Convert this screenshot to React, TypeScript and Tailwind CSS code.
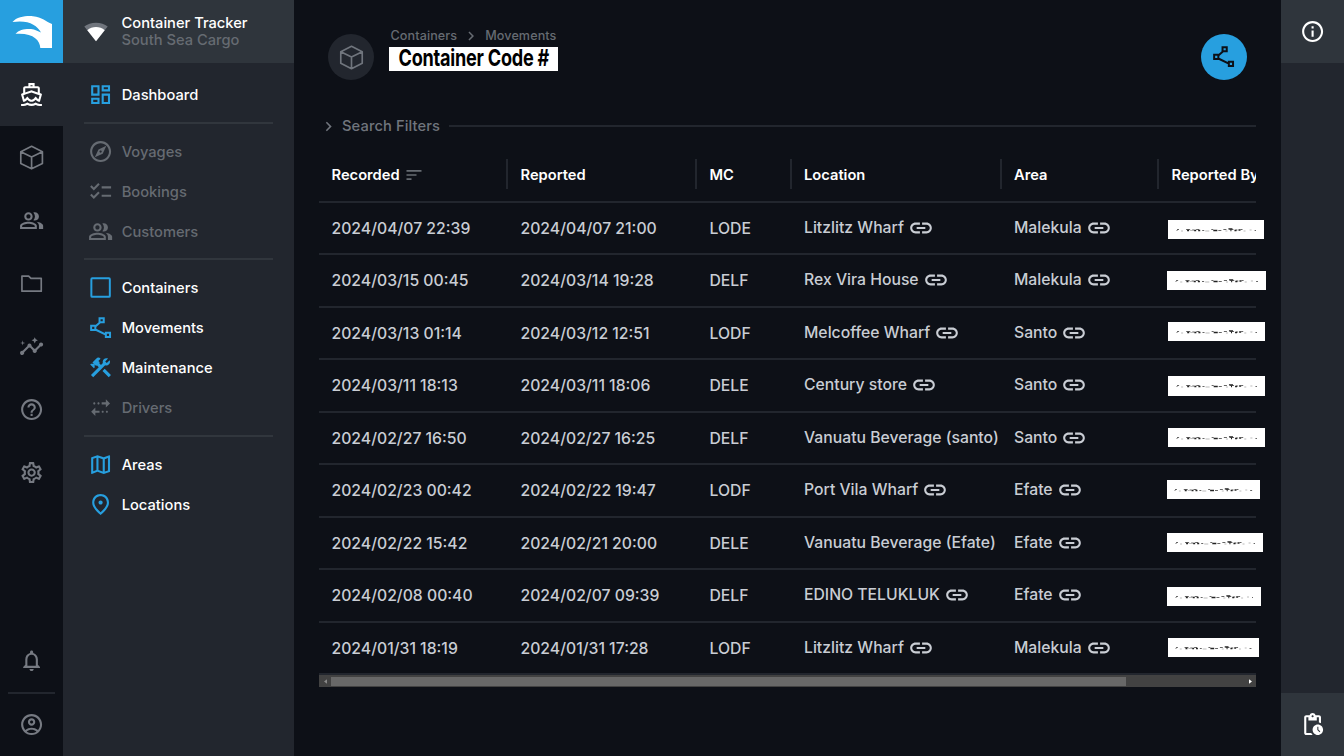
import React from "react";
import {
  MdChecklist,
  MdChevronRight,
  MdConstruction,
  MdHelpOutline,
  MdInfoOutline,
  MdInsights,
  MdLink,
  MdMultipleStop,
  MdNotificationsNone,
  MdOutlineAccountCircle,
  MdOutlineDashboard,
  MdOutlineDirectionsBoat,
  MdOutlineExplore,
  MdOutlineMap,
  MdOutlinePeopleAlt,
  MdOutlinePlace,
  MdOutlineSettings,
  MdPendingActions,
  MdSort,
} from "react-icons/md";

type IconProps = { className?: string };
type IconComponent = (props: IconProps) => React.ReactNode;

function CubeIcon({ className }: IconProps) {
  return (
    <svg viewBox="0 0 24 24" className={className} fill="none" stroke="currentColor" strokeWidth="1.6" strokeLinejoin="round">
      <path d="M12 1.3 22.3 6.4V17.6L12 22.7 1.7 17.6V6.4ZM1.7 6.4 12 11.5 22.3 6.4M12 11.5V22.7" />
    </svg>
  );
}

function FolderIcon({ className }: IconProps) {
  return (
    <svg viewBox="0 0 24 24" className={className} fill="none" stroke="currentColor" strokeWidth="1.6" strokeLinejoin="round">
      <path d="M2.8 4.8H9.2L11.4 7H21.2V19.2H2.8Z" />
    </svg>
  );
}

function SquareIcon({ className }: IconProps) {
  return (
    <svg viewBox="0 0 24 24" className={className} fill="none" stroke="currentColor" strokeWidth="1.9">
      <rect x="3.2" y="3.2" width="17.6" height="17.6" rx="0.8" />
    </svg>
  );
}

function RouteIcon({ className }: IconProps) {
  return (
    <svg viewBox="0 0 24 24" className={className} fill="none" stroke="currentColor" strokeWidth="1.9">
      <path d="M11 3H15V7H11ZM3 10.3H7V14.3H3ZM17 17H21V21H17ZM11.6 7 7 11M7 13.8 17 18.7" />
    </svg>
  );
}

function Logo() {
  return (
    <svg viewBox="0 0 63 63" className="h-[63px] w-[63px]" fill="#fff">
      <path d="M12.5 22C17 16.5 27 15.6 33 16.2C42 17 46 21.5 52 24V48H40.3C40 40 33 32.5 15.5 33.8C19 29.5 26 28.5 31 29C35 29.5 38 31 41 32.5C37 25 28 19.5 12.5 22Z" />
    </svg>
  );
}

function SignalIcon() {
  return (
    <svg viewBox="0 0 24 20" className="h-5 w-6">
      <path d="M.3 4.5C6 -.6 18 -.6 23.7 4.5L12 19.3Z" fill="#70757d" />
      <path d="M3.3 8.2C8 3.8 16 3.8 20.7 8.2L12 19.3Z" fill="#fff" />
    </svg>
  );
}

const railItems: IconComponent[] = [
  CubeIcon,
  MdOutlinePeopleAlt,
  FolderIcon,
  MdInsights,
  MdHelpOutline,
  MdOutlineSettings,
];

type NavItem = { label: string; icon: IconComponent; muted?: boolean };

const navGroups: NavItem[][] = [
  [{ label: "Dashboard", icon: MdOutlineDashboard }],
  [
    { label: "Voyages", icon: MdOutlineExplore, muted: true },
    { label: "Bookings", icon: MdChecklist, muted: true },
    { label: "Customers", icon: MdOutlinePeopleAlt, muted: true },
  ],
  [
    { label: "Containers", icon: SquareIcon },
    { label: "Movements", icon: RouteIcon },
    { label: "Maintenance", icon: MdConstruction },
    { label: "Drivers", icon: MdMultipleStop, muted: true },
  ],
  [
    { label: "Areas", icon: MdOutlineMap },
    { label: "Locations", icon: MdOutlinePlace },
  ],
];

type Movement = {
  recorded: string;
  reported: string;
  mc: string;
  location: string;
  area: string;
  mask: string;
  hideLink?: boolean;
};

const movements: Movement[] = [
  { recorded: "2024/04/07 22:39", reported: "2024/04/07 21:00", mc: "LODE", location: "Litzlitz Wharf", area: "Malekula", mask: "ml-[9px] mt-[17.5px] w-24 h-[19px]" },
  { recorded: "2024/03/15 00:45", reported: "2024/03/14 19:28", mc: "DELF", location: "Rex Vira House", area: "Malekula", mask: "ml-2 mt-[16px] w-[99px] h-[19px]" },
  { recorded: "2024/03/13 01:14", reported: "2024/03/12 12:51", mc: "LODF", location: "Melcoffee Wharf", area: "Santo", mask: "ml-[9px] mt-[14.5px] w-[97px] h-[19px]" },
  { recorded: "2024/03/11 18:13", reported: "2024/03/11 18:06", mc: "DELE", location: "Century store", area: "Santo", mask: "ml-[9px] mt-[16px] w-[97px] h-5" },
  { recorded: "2024/02/27 16:50", reported: "2024/02/27 16:25", mc: "DELF", location: "Vanuatu Beverage (santo)", area: "Santo", mask: "ml-[9px] mt-[15.5px] w-[97px] h-[19px]", hideLink: true },
  { recorded: "2024/02/23 00:42", reported: "2024/02/22 19:47", mc: "LODF", location: "Port Vila Wharf", area: "Efate", mask: "ml-2 mt-[15px] w-[93px] h-[19px]" },
  { recorded: "2024/02/22 15:42", reported: "2024/02/21 20:00", mc: "DELE", location: "Vanuatu Beverage (Efate)", area: "Efate", mask: "ml-2 mt-[15.5px] w-24 h-[19px]", hideLink: true },
  { recorded: "2024/02/08 00:40", reported: "2024/02/07 09:39", mc: "DELF", location: "EDINO TELUKLUK", area: "Efate", mask: "ml-2 mt-[17px] w-[94px] h-[19px]" },
  { recorded: "2024/01/31 18:19", reported: "2024/01/31 17:28", mc: "LODF", location: "Litzlitz Wharf", area: "Malekula", mask: "ml-[9px] mt-[15.5px] w-[91px] h-[19px]" },
];

const columns = "grid grid-cols-[189px_189px_94.5px_210px_157.5px_97px]";

function MaskedName({ className }: { className: string }) {
  return (
    <div className={`${className} flex items-center justify-center bg-white`}>
      <svg viewBox="0 0 80 4" preserveAspectRatio="none" className="h-1 w-[84%]" fill="none">
        <path d="M0 2.5H2M5 3H7M14 2.5H16M29 3H33M49 3H51M67 3H69M73 2H75" stroke="#bbb" />
        <path d="M1 1.5H3M10 1.5H14M16 2H18M20 1.5H23M26 2.5H28M35 1.5H37M42 2.5H45M47 1.5H50M53 1.5H57M59 2H61M64 1.5H66M78 2.5H80" stroke="#666" strokeWidth="1.2" />
        <path d="M11 2.5H13M18 2.5H20M22 2.5H24M37 2.5H41M52 .8H56M54 2.5H55M58 2.5H60M62 2H64" stroke="#222" strokeWidth="1.3" />
      </svg>
    </div>
  );
}

function LinkedText({ text, hideLink }: { text: string; hideLink?: boolean }) {
  return (
    <div className="flex items-center gap-1 overflow-hidden whitespace-nowrap pl-[12.5px]">
      <span>{text}</span>
      {!hideLink && <MdLink className="size-[26px] shrink-0" />}
    </div>
  );
}

function HeaderCell({ children, last }: { children: React.ReactNode; last?: boolean }) {
  return (
    <div className={`flex h-[30px] items-center whitespace-nowrap pl-[12.5px] pt-0.5 ${last ? "" : "border-r-2 border-[#22262e]"}`}>
      {children}
    </div>
  );
}

export default function App() {
  return (
    <div className="flex h-screen w-screen overflow-hidden bg-[#0d1017] font-['Inter',sans-serif] text-[15.75px] text-white">
      <nav className="flex w-[63px] shrink-0 flex-col items-center text-[#767a82]">
        <div className="size-[63px] bg-[#279fdf]">
          <Logo />
        </div>
        <div className="flex size-[63px] items-center justify-center bg-[#22262e] text-white">
          <MdOutlineDirectionsBoat className="size-[25px]" />
        </div>
        {railItems.map((Icon, i) => (
          <div key={i} className="flex size-[63px] items-center justify-center">
            <Icon className="size-[25.2px]" />
          </div>
        ))}
        <div className="mt-auto flex size-[63px] items-center justify-center">
          <MdNotificationsNone className="size-[25.2px]" />
        </div>
        <div className="h-0.5 w-[47px] bg-[#22262e]" />
        <div className="flex h-[62px] w-[63px] items-center justify-center">
          <MdOutlineAccountCircle className="size-[25.2px]" />
        </div>
      </nav>

      <aside className="w-[231px] shrink-0 bg-[#22262e]">
        <header className="flex h-[63px] items-center bg-[#2f353c] pl-[21px]">
          <SignalIcon />
          <div className="ml-[13.5px] pt-px text-[14.7px] font-medium leading-[17.5px]">
            <div>Container Tracker</div>
            <div className="text-[#666b72]">South Sea Cargo</div>
          </div>
        </header>
        <div className="px-[21px] pt-3">
          {navGroups.map((group, gi) => (
            <div key={gi}>
              {gi > 0 && <div className="mb-[7.6px] mt-[6.9px] h-0.5 bg-[#31363d]" />}
              {group.map(({ label, icon: Icon, muted }) => (
                <div key={label} className={`flex h-10 items-center pl-1 font-medium ${muted ? "text-[#666b72]" : "text-white"}`}>
                  <Icon className={`size-[25.2px] ${muted ? "" : "text-[#279fdf]"}`} />
                  <span className="ml-[8.5px] pt-px text-[14.7px]">{label}</span>
                </div>
              ))}
            </div>
          ))}
        </div>
      </aside>

      <main className="min-w-0 flex-1 px-[25px]">
        <header className="flex h-[105px] items-start pl-[9px] pr-[9px]">
          <div className="mt-[34px] flex size-[46px] items-center justify-center rounded-full bg-[#22262e] text-[#70757d]">
            <CubeIcon className="size-[25px]" />
          </div>
          <div className="ml-[15px] mt-[27px]">
            <div className="flex h-[18px] items-center pl-[1.5px] text-[12.6px] font-medium tracking-[0.1px] text-[#666b72]">
              Containers
              <MdChevronRight className="mx-[5px] size-[18px]" />
              Movements
            </div>
            <div className="mt-0.5 flex h-6 w-[169px] items-center justify-center bg-white text-black">
              <span className="origin-center scale-x-[0.77] whitespace-nowrap pb-0.5 text-[23.5px] font-bold leading-[22px] tracking-[-0.3px]">Container Code #</span>
            </div>
          </div>
          <div className="ml-auto mt-[34px] flex size-[46px] items-center justify-center rounded-full bg-[#279fdf] text-[#0d1017]">
            <RouteIcon className="size-[25.2px]" />
          </div>
        </header>

        <div className="flex h-[42px] items-center text-[14.7px] font-medium text-[#70757d]">
          <MdChevronRight className="size-[19px]" />
          <span className="ml-1 pt-px tracking-[0.1px]">Search Filters</span>
          <div className="ml-[9px] h-0.5 flex-1 bg-[#22262e]" />
        </div>

        <section>
          <div className={`${columns} h-[55.5px] w-[937px] items-center overflow-hidden border-b-2 border-[#22262e] text-[14.7px] font-semibold`}>
            <HeaderCell>
              Recorded
              <MdSort className="ml-1 size-5 text-[#666b72]" />
            </HeaderCell>
            <HeaderCell>Reported</HeaderCell>
            <HeaderCell>MC</HeaderCell>
            <HeaderCell>Location</HeaderCell>
            <HeaderCell>Area</HeaderCell>
            <HeaderCell last>Reported By</HeaderCell>
          </div>
          {movements.map((row) => (
            <div key={row.recorded} className={`${columns} h-[52.5px] w-[937px] items-center border-b-2 border-[#22262e] font-medium text-[#c9cdd4]`}>
              <div className="pl-[12.5px] pt-0.5">{row.recorded}</div>
              <div className="pl-[12.5px] pt-0.5">{row.reported}</div>
              <div className="pl-[12.5px] pt-0.5">{row.mc}</div>
              <LinkedText text={row.location} hideLink={row.hideLink} />
              <LinkedText text={row.area} />
              <div className="self-start">
                <MaskedName className={row.mask} />
              </div>
            </div>
          ))}
          <div className="flex h-3 items-center bg-[#424242]">
            <div className="flex w-3 justify-center">
              <svg viewBox="0 0 4 6" className="h-[5px] w-[3px]"><path d="M4 0V6L0 3Z" fill="#8a8a8a" /></svg>
            </div>
            <div className="h-[9px] w-[795px] bg-[#686868]" />
            <div className="ml-auto flex w-3 justify-center">
              <svg viewBox="0 0 4 6" className="h-[5px] w-[3px]"><path d="M0 0V6L4 3Z" fill="#fff" /></svg>
            </div>
          </div>
        </section>
      </main>

      <aside className="flex w-[63px] shrink-0 flex-col justify-between bg-[#22262e]">
        <div className="flex size-[63px] items-center justify-center bg-[#2f353c]">
          <MdInfoOutline className="size-[25.2px]" />
        </div>
        <div className="flex size-[63px] items-center justify-center bg-[#2f353c]">
          <MdPendingActions className="size-[25.2px]" />
        </div>
      </aside>
    </div>
  );
}
